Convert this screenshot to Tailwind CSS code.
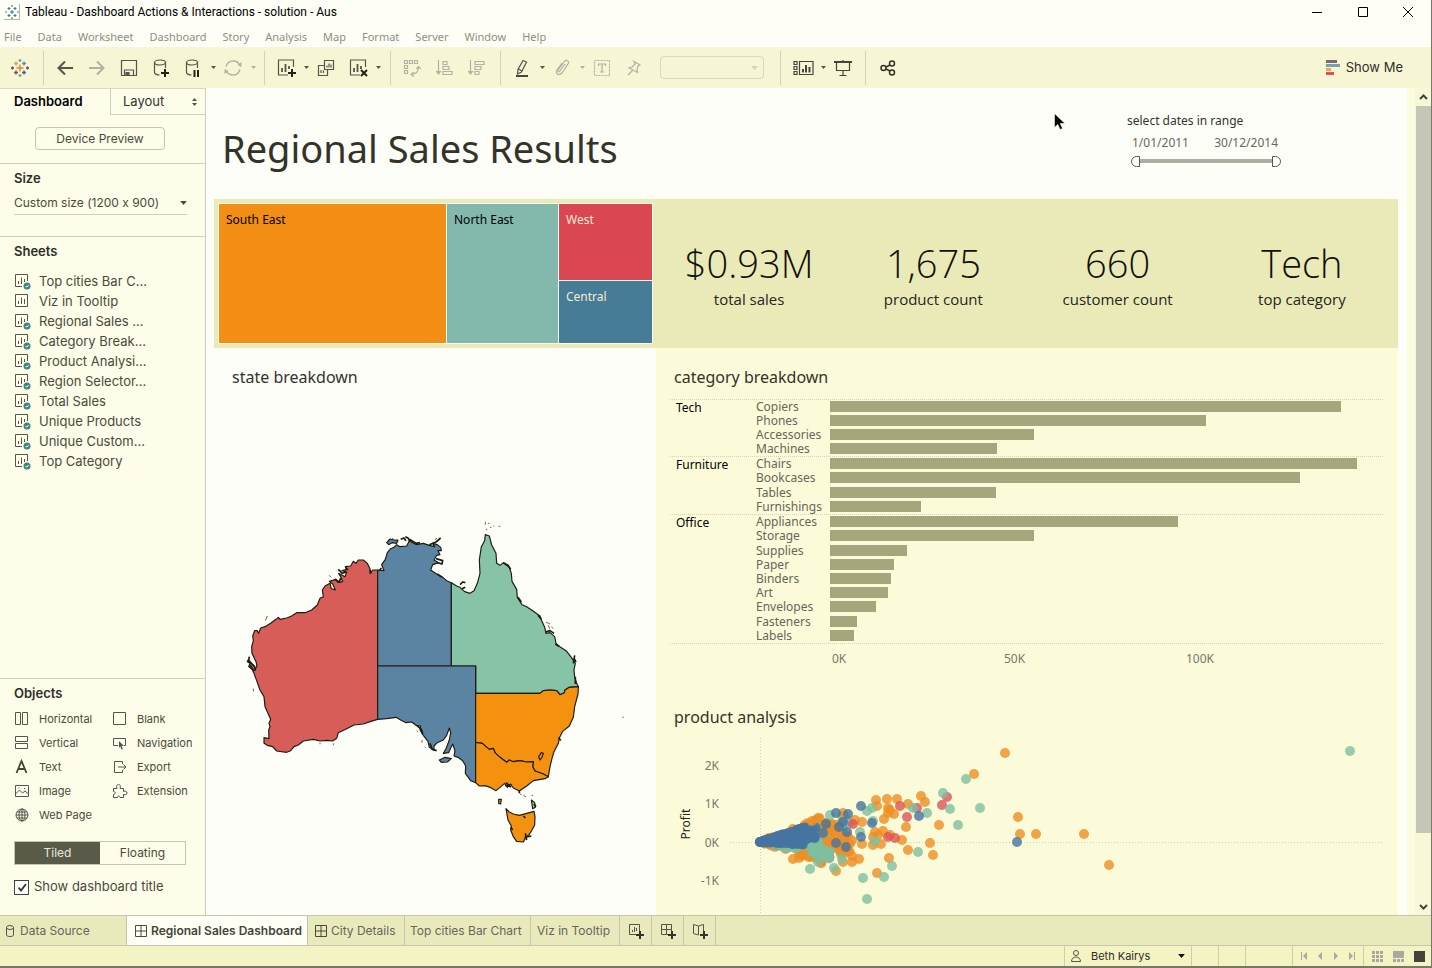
<!DOCTYPE html>
<html lang="en">
<head>
    <meta charset="UTF-8">
    <meta name="viewport" content="width=device-width, initial-scale=1.0">
    <title>Tableau - Dashboard Actions &amp; Interactions - solution - Aus</title>
    <script src="https://cdn.jsdelivr.net/npm/@tailwindcss/browser@4"></script>
</head>
<body class="h-screen overflow-hidden flex flex-col bg-[#fefef6] border-r border-b-2 border-[#77776a] font-['Inter',sans-serif] text-[13px] text-[#4a4a3a]">

    <!-- Shared icons -->
    <svg class="hidden">
        <symbol id="logo" viewBox="0 0 18 18" fill="none" stroke-width="1.4">
            <path d="M9 5.500v7M5.500 9h7" stroke="#e0863a"/>
            <path d="M5 2.500v4M3 4.500h4" stroke="#d9a441"/>
            <path d="M13 2.500v4M11 4.500h4" stroke="#5b8fa8"/>
            <path d="M5 11.500v4M3 13.500h4" stroke="#a83a62"/>
            <path d="M13 11.500v4M11 13.500h4" stroke="#3f5f8a"/>
            <path d="M9 0v3M7.500 1.500h3M9 15v3M7.500 16.500h3" stroke="#6fa8a0"/>
            <path d="M1.500 7.500v3M0 9h3M16.500 7.500v3M15 9h3" stroke="#4f4f80"/>
        </symbol>
        <symbol id="sheet" viewBox="0 0 18 18" fill="none" stroke="#55554a">
            <path d="M13.500 8V1.500h-12v12H8M4.500 11V8M7.500 11V4.500M10.500 9V6"/>
            <circle cx="13" cy="13" r="3.500" fill="#3f8580" stroke="none"/>
            <path d="M11.500 13l1.200 1.200 2-2.200" stroke="#fff"/>
        </symbol>
        <symbol id="sheet-plain" viewBox="0 0 18 18" fill="none" stroke="#55554a">
            <path d="M1.500 1.500h12v12h-12zM4.500 11V8M7.500 11V4.500M10.500 11V6"/>
        </symbol>
        <symbol id="grid" viewBox="0 0 12 12" fill="none" stroke="#4a4a3a">
            <path d="M.5.5h11v11H.5zM6 .5v11M.5 6h11"/>
        </symbol>
        <symbol id="caret" viewBox="0 0 5 3"><path d="M0 0h5L2.500 3z" fill="currentColor"/></symbol>
    </svg>

    <!-- Title bar -->
    <header class="h-6 shrink-0 flex items-center pl-1 text-xs text-black font-['Roboto',sans-serif]">
        <span class="w-4 h-4 border-r border-b border-[#b5b5a8] flex items-center justify-center mr-[5px]">
            <svg class="w-[14px] h-[14px]" viewBox="0 0 14 14" stroke="#3f8090" stroke-width="1.200"><path d="M7 5v4M5 7h4M4 2v3M2.500 3.500h3M10 2v3M8.500 3.500h3M4 9v3M2.500 10.500h3M10 9v3M8.500 10.500h3M7 0v2M7 12v2M0 7h2M12 7h2"/></svg>
        </span>
        <h1>Tableau - Dashboard Actions &amp; Interactions - solution - Aus</h1>
        <div class="ml-auto flex">
            <button class="w-[46px] h-6 flex items-center justify-center" aria-label="Minimize"><svg class="w-[10px] h-[10px]" viewBox="0 0 10 10" stroke="#000"><path d="M0 5.500h10"/></svg></button>
            <button class="w-[45px] h-6 flex items-center justify-center" aria-label="Maximize"><svg class="w-[10px] h-[10px]" viewBox="0 0 10 10" stroke="#000" fill="none"><path d="M.5.5h9v9h-9z"/></svg></button>
            <button class="w-[46px] h-6 flex items-center justify-center" aria-label="Close"><svg class="w-[10px] h-[10px]" viewBox="0 0 10 10" stroke="#000"><path d="M0 0l10 10M10 0L0 10"/></svg></button>
        </div>
    </header>

    <!-- Menu -->
    <nav class="h-[23px] shrink-0 flex items-center gap-4 pl-1 pt-1 text-[11px] text-[#8e8e80] font-['Noto_Sans',sans-serif]">
        <a href="#">File</a>
        <a href="#">Data</a>
        <a href="#">Worksheet</a>
        <a href="#">Dashboard</a>
        <a href="#">Story</a>
        <a href="#">Analysis</a>
        <a href="#">Map</a>
        <a href="#">Format</a>
        <a href="#">Server</a>
        <a href="#">Window</a>
        <a href="#">Help</a>
    </nav>

    <!-- Toolbar -->
    <div class="h-[41px] shrink-0 flex items-center bg-[#f6f6d4] text-[#55554a]">
        <button class="w-10 flex justify-center" aria-label="Start page"><svg class="w-[18px] h-[18px]"><use href="#logo"/></svg></button>
        <span class="w-px h-[34px] ml-[3px] mr-[5px] bg-[#d2d2c0]"></span>
        <button class="w-8 flex justify-center" aria-label="Undo"><svg class="w-4 h-4" viewBox="0 0 16 16" fill="none" stroke="#55554a" stroke-width="2"><path d="M16 8H1.500M8 1.500L1.500 8 8 14.500"/></svg></button>
        <button class="w-8 flex justify-center" aria-label="Redo"><svg class="w-4 h-4" viewBox="0 0 16 16" fill="none" stroke="#b2b2a4" stroke-width="2"><path d="M0 8h14.500M8 1.500L14.500 8 8 14.500"/></svg></button>
        <button class="w-8 flex justify-center" aria-label="Save"><svg class="w-[18px] h-[18px]" viewBox="0 0 18 18" fill="none" stroke="#55554a" stroke-width="1.200"><path d="M1.500 1.500h15v15h-15zM4.500 16v-5h9v5"/><path d="M6 13.500h3V16H6z" fill="#55554a"/></svg></button>
        <button class="w-8 flex justify-center" aria-label="New data source"><svg class="w-[18px] h-[18px]" viewBox="0 0 18 18" fill="none" stroke="#55554a" stroke-width="1.200"><ellipse cx="8" cy="3.500" rx="5.500" ry="2.500"/><path d="M2.500 3.500v10c0 1 2 2.500 5 2.500M13.500 3.500V9"/><path d="M13 10v8M9 14h8" stroke="#222218" stroke-width="2"/></svg></button>
        <button class="w-8 flex justify-center" aria-label="Pause auto updates"><svg class="w-[18px] h-[18px]" viewBox="0 0 18 18" fill="none" stroke="#55554a" stroke-width="1.200"><ellipse cx="8" cy="3.500" rx="5.500" ry="2.500"/><path d="M2.500 3.500v10c0 1 2 2.500 5 2.500M13.500 3.500V9"/><path d="M10.500 11v7M14 11v7" stroke="#222218" stroke-width="2"/></svg></button>
        <button class="w-2 flex justify-center" aria-label="Update options"><svg class="w-[5px] h-[3px]"><use href="#caret"/></svg></button>
        <button class="w-8 flex justify-center" aria-label="Run update"><svg class="w-[18px] h-[18px]" viewBox="0 0 18 18" fill="none" stroke="#b2b2a4" stroke-width="1.400"><path d="M2 7.500C3 4 6 2 9 2c3 0 5.500 1.500 6.500 4M16 10.500C15 14 12 16 9 16c-3 0-5.500-1.500-6.500-4"/><path d="M17.500 3v5l-4-2zM.5 15v-5l4 2z" fill="#b2b2a4" stroke="none"/></svg></button>
        <button class="w-2 flex justify-center text-[#b2b2a4]" aria-label="Run options"><svg class="w-[5px] h-[3px]"><use href="#caret"/></svg></button>
        <span class="w-px h-[34px] ml-[7px] mr-[5px] bg-[#d2d2c0]"></span>
        <button class="w-8 flex justify-center" aria-label="New worksheet"><svg class="w-[19px] h-[19px]" viewBox="0 0 19 19" fill="none" stroke="#55554a" stroke-width="1.200"><path d="M16.500 9V2h-15v15H11"/><path d="M5 14v-4M8.500 14V6M12 11V8" stroke-width="1.800"/><path d="M15 11v8M11 15h8" stroke="#222218" stroke-width="2"/></svg></button>
        <button class="w-2 flex justify-center" aria-label="New sheet options"><svg class="w-[5px] h-[3px]"><use href="#caret"/></svg></button>
        <button class="w-8 flex justify-center" aria-label="Duplicate"><svg class="w-[18px] h-[18px]" viewBox="0 0 18 18" fill="none" stroke="#55554a" stroke-width="1.200"><path d="M7.500 1.500h9v9h-9zM7 6.500H1.500v10h9V11M4 14v-3M6.500 14v-2.500M10 8.500v-2M12 8.500v-4M14 8.500v-3"/></svg></button>
        <button class="w-8 flex justify-center" aria-label="Clear sheet"><svg class="w-[19px] h-[19px]" viewBox="0 0 19 19" fill="none" stroke="#55554a" stroke-width="1.200"><path d="M16.500 9V2h-15v15H11"/><path d="M5 14v-4M8.500 14V6M12 11V8" stroke-width="1.800"/><path d="M12 12l6 6M18 12l-6 6" stroke="#222218" stroke-width="2"/></svg></button>
        <button class="w-2 flex justify-center" aria-label="Clear options"><svg class="w-[5px] h-[3px]"><use href="#caret"/></svg></button>
        <span class="w-px h-[34px] ml-2 mr-[5px] bg-[#d2d2c0]"></span>
        <button class="w-8 flex justify-center" aria-label="Swap rows and columns"><svg class="w-[18px] h-[18px]" viewBox="0 0 18 18" fill="none" stroke="#b2b2a4" stroke-width="1.200"><path d="M1.500 1.500h3v3h-3zM6.500 1.500h3v3h-3zM11.500 1.500h3v3h-3zM1.500 6.500h3v3h-3zM1.500 11.500h3v3h-3zM15.500 8c0 5-3 7-7 7.500M13 10l2.500-2.500L18 10M11 13l-3 2.500 3 2"/></svg></button>
        <button class="w-8 flex justify-center" aria-label="Sort ascending"><svg class="w-[18px] h-[18px]" viewBox="0 0 18 18" fill="none" stroke="#b2b2a4" stroke-width="1.200"><path d="M3.500 1v13M8 2.500h4v3H8zM8 7.500h6v3H8zM8 12.500h9v3H8z"/><path d="M0.500 12h6l-3 4z" fill="#b2b2a4" stroke="none"/></svg></button>
        <button class="w-8 flex justify-center" aria-label="Sort descending"><svg class="w-[18px] h-[18px]" viewBox="0 0 18 18" fill="none" stroke="#b2b2a4" stroke-width="1.200"><path d="M3.500 1v13M8 2.500h9v3H8zM8 7.500h6v3H8zM8 12.500h4v3H8z"/><path d="M0.500 12h6l-3 4z" fill="#b2b2a4" stroke="none"/></svg></button>
        <span class="w-px h-[34px] ml-2 mr-[5px] bg-[#d2d2c0]"></span>
        <button class="w-8 flex justify-center" aria-label="Highlight"><svg class="w-[18px] h-[18px]" viewBox="0 0 18 18" fill="none" stroke="#55554a" stroke-width="1.200"><path d="M10 1.500l3.500 1.500-5 10-4 2 .5-4.500zM5.500 10l3.500 2"/><path d="M3 17h12" stroke="#33332a" stroke-width="1.800"/></svg></button>
        <button class="w-2 flex justify-center" aria-label="Highlight options"><svg class="w-[5px] h-[3px]"><use href="#caret"/></svg></button>
        <button class="w-8 flex justify-center" aria-label="Group members"><svg class="w-[18px] h-[18px]" viewBox="0 0 18 18" fill="none" stroke="#b2b2a4" stroke-width="1.200"><path d="M12 5l-5 7c-1 2-3 0-2-1l6-8c2-3 6-1 4 2l-6 9c-3 3-7 1-5-3l5-7"/></svg></button>
        <button class="w-2 flex justify-center text-[#b2b2a4]" aria-label="Group options"><svg class="w-[5px] h-[3px]"><use href="#caret"/></svg></button>
        <button class="w-8 flex justify-center" aria-label="Show mark labels"><svg class="w-[18px] h-[18px]" viewBox="0 0 18 18" fill="none" stroke="#b2b2a4" stroke-width="1.200"><path d="M1.500 1.500h15v15h-15z" stroke-dasharray="2 1"/><path d="M5.500 7V5h7v2M9 5v8M7 13h4"/></svg></button>
        <button class="w-8 flex justify-center" aria-label="Fix axes"><svg class="w-[16px] h-[16px]" viewBox="0 0 16 16" fill="none" stroke="#b2b2a4" stroke-width="1.200"><path d="M8 1.500L14 5l-2 1-1 4 .5 2.500L3 8l3-1 3-3zM6.500 10.500L2 15"/></svg></button>
        <select class="w-[104px] h-[23px] ml-[10px] border border-[#d8d8c4] rounded-sm appearance-none" aria-label="Fit" disabled></select>
        <span class="w-0 flex justify-center text-[#d2d2c0]"><svg class="w-[7px] h-1 shrink-0 mr-5"><use href="#caret"/></svg></span>
        <span class="w-px h-[34px] ml-4 mr-1 bg-[#d2d2c0]"></span>
        <button class="w-9 flex justify-center" aria-label="Show or hide cards"><svg class="w-[21px] h-4" viewBox="0 0 21 16" fill="none" stroke="#44443a" stroke-width="1.200"><path d="M1 1.500h3v3H1zM1 6.500h3v3H1zM1 11.500h3v3H1zM6.500 1.500h13.500v13H6.500z"/><path d="M10 12.500V9M13 12.500V5M16.500 12.500V7" stroke-width="2"/></svg></button>
        <button class="w-1 flex justify-center" aria-label="Card options"><svg class="w-[5px] h-[3px] shrink-0"><use href="#caret"/></svg></button>
        <button class="w-9 flex justify-center" aria-label="Presentation mode"><svg class="w-[18px] h-[18px]" viewBox="0 0 18 18" fill="none" stroke="#44443a" stroke-width="1.200"><path d="M0 3h18" stroke-width="2"/><path d="M2.500 3v8.500h13V3M9 11.500v5M5.500 16.500h7M9 1v2"/></svg></button>
        <span class="w-px h-[34px] ml-1 mr-1 bg-[#d2d2c0]"></span>
        <button class="w-9 flex justify-center" aria-label="Share"><svg class="w-4 h-4" viewBox="0 0 16 16" fill="none" stroke="#33332a" stroke-width="1.500"><circle cx="3.500" cy="8" r="2.500"/><circle cx="12" cy="3.500" r="2.500"/><circle cx="12" cy="12.500" r="2.500"/><path d="M6 7l4-2M6 9l4 2"/></svg></button>
        <button class="ml-auto mr-7 flex items-center gap-[6px] text-[#2e2e28]">
            <svg class="w-[14px] h-[15px]" viewBox="0 0 14 15"><path d="M0 0h11v3H0z" fill="#7d6878"/><path d="M0 4h14v3H0z" fill="#79a0b0"/><path d="M0 8h5v3H0z" fill="#f0a060"/><path d="M0 12h8v3H0z" fill="#e05060"/></svg>
            Show Me
        </button>
    </div>

    <main class="flex-1 min-h-0 flex">
        <!-- Side pane -->
        <aside class="w-[206px] shrink-0 flex flex-col bg-[#fdfde9] border-r border-[#cfcfbc]">
            <div class="h-[27px] shrink-0 flex border-t border-[#d8d8c4]">
                <button class="w-[110px] pl-[14px] text-left font-semibold text-black">Dashboard</button>
                <button class="flex-1 flex items-center justify-between pl-3 pr-2 border-l border-b border-[#cfcfbc] text-[#33332a]">
                    Layout
                    <svg class="w-[5px] h-2" viewBox="0 0 5 8" fill="#55554a"><path d="M0 3h5L2.500 0zM0 5h5L2.500 8z"/></svg>
                </button>
            </div>
            <div class="h-[49px] shrink-0 pt-3 border-b border-[#cfcfbc]">
                <button class="block w-[130px] h-[23px] ml-[35px] border border-[#c4c4b2] rounded-sm text-xs">Device Preview</button>
            </div>
            <section class="h-[73px] shrink-0 pl-[14px] pr-[18px] pt-1 border-b border-[#cfcfbc]">
                <label for="size" class="block h-5 leading-5 font-semibold text-[#2e2e28]">Size</label>
                <div class="flex items-center border-b border-[#cfcfbc] mt-1">
                    <select id="size" class="flex-1 h-[22px] appearance-none text-xs [font-feature-settings:'calt'_0]">
                        <option>Custom size (1200 x 900)</option>
                    </select>
                    <svg class="w-[7px] h-1"><use href="#caret"/></svg>
                </div>
            </section>
            <section class="flex-1 min-h-0 pl-[14px] pt-1">
                <h2 class="h-5 leading-5 font-semibold text-[#2e2e28]">Sheets</h2>
                <ul id="sheets" class="mt-[11px]"></ul>
            </section>
            <section class="shrink-0 pl-[14px] pt-1 pb-5 border-t border-[#cfcfbc]">
                <h2 class="h-5 leading-5 font-semibold text-[#2e2e28]">Objects</h2>
                <div class="grid grid-cols-[98px_1fr] mt-1 text-[11px] leading-6">
                    <button class="flex items-center gap-[9px]"><svg class="w-4 h-4" viewBox="0 0 16 16" fill="none" stroke="#55554a"><path d="M1.500 1.500h5v12h-5zM8.500 1.500h5v12h-5z"/></svg>Horizontal</button>
                    <button class="flex items-center gap-[9px]"><svg class="w-4 h-4" viewBox="0 0 16 16" fill="none" stroke="#55554a"><path d="M1.500 1.500h12v12h-12z"/></svg>Blank</button>
                    <button class="flex items-center gap-[9px]"><svg class="w-4 h-4" viewBox="0 0 16 16" fill="none" stroke="#55554a"><path d="M1.500 1.500h12v5h-12zM1.500 8.500h12v5h-12z"/></svg>Vertical</button>
                    <button class="flex items-center gap-[9px]"><svg class="w-4 h-4 shrink-0" viewBox="0 0 16 16" fill="none" stroke="#55554a"><path d="M6 10.500H1.500v-7h12v7H12"/><path d="M7 6l5 5H9.500l1.500 3-1.500.5-1.200-3L7 13z" fill="#55554a" stroke="none"/></svg>Navigation</button>
                    <button class="flex items-center gap-[9px]"><svg class="w-4 h-4" viewBox="0 0 16 16" fill="none" stroke="#44443a" stroke-width="1.800"><path d="M2.500 14L7.500 2l5 12M4.500 10h6"/></svg>Text</button>
                    <button class="flex items-center gap-[9px]"><svg class="w-4 h-4" viewBox="0 0 16 16" fill="none" stroke="#55554a"><path d="M10.500 5V2.500h-8v11h8V11M6 8h8M11.500 5.500L14 8l-2.500 2.500"/></svg>Export</button>
                    <button class="flex items-center gap-[9px]"><svg class="w-4 h-4" viewBox="0 0 16 16" fill="none" stroke="#55554a"><path d="M1.500 2.500h13v11h-13zM1.500 11l4-4 3 3 2.500-2 3.500 3M4.500 5h1M10 5.500h1"/></svg>Image</button>
                    <button class="flex items-center gap-[9px]"><svg class="w-4 h-4" viewBox="0 0 16 16" fill="none" stroke="#55554a"><path d="M1.500 5.500h3.500c-1-2.500 0-4 1.500-4s2.500 1.500 1.500 4h3.500v3c2-1 3.500 0 3.500 1.500s-1.500 2-3.500 1.500v3H8c0-2-2.500-2-2.500 0h-4v-3c2 0 2.500-3 0-3z"/></svg>Extension</button>
                    <button class="flex items-center gap-[9px]"><svg class="w-4 h-4" viewBox="0 0 16 16" fill="none" stroke="#55554a"><circle cx="8" cy="8" r="6"/><ellipse cx="8" cy="8" rx="3" ry="6"/><path d="M8 2v12M2 8h12M3 5h10M3 11h10"/></svg>Web Page</button>
                </div>
                <div class="flex w-[172px] h-6 mt-[14px] border border-[#c4c4b2] text-xs">
                    <button class="flex-1 bg-[#5a5a48] text-[#e8e8dc]">Tiled</button>
                    <button class="flex-1">Floating</button>
                </div>
                <label class="flex items-center gap-[5px] mt-[14px] h-4">
                    <input type="checkbox" checked class="w-[15px] h-[15px] appearance-none border border-[#44443a] bg-white">
                    <span class="relative w-0"><svg class="absolute -left-4 -top-1 w-[9px] h-[9px]" viewBox="0 0 9 9" fill="none" stroke="#33332a" stroke-width="1.800"><path d="M.5 4.500l2.500 3L8 1"/></svg></span>
                    <span class="-ml-[5px]">Show dashboard title</span>
                </label>
            </section>
        </aside>

        <!-- Dashboard -->
        <div class="flex-1 min-w-0 overflow-hidden bg-[#fefef9] pl-2 pr-[9px] text-[#33332a] font-['Noto_Sans',sans-serif] text-xs">
            <div class="h-[111px] flex justify-between pl-2">
                <h2 class="text-[38px] leading-[48px] pt-9">Regional Sales Results</h2>
                <div class="w-[154px] mr-[117px] pt-6">
                    <p id="range-title" class="h-[18px] leading-[18px]">select dates in range</p>
                    <div class="flex justify-between pl-[5px] pr-[3px] mt-1 h-[18px] leading-[18px] text-[#66665a]"><span>1/01/2011</span><span>30/12/2014</span></div>
                    <div class="relative h-4 ml-1">
                        <div class="absolute left-2 right-2 top-[7px] h-1 bg-[#adada0]"></div>
                        <input type="range" aria-label="Start date" value="0" class="absolute inset-x-0 top-[3px] h-3 w-full appearance-none bg-transparent pointer-events-none [&::-webkit-slider-thumb]:appearance-none [&::-webkit-slider-thumb]:pointer-events-auto [&::-webkit-slider-thumb]:w-[9px] [&::-webkit-slider-thumb]:h-[11px] [&::-webkit-slider-thumb]:border [&::-webkit-slider-thumb]:border-[#55554a] [&::-webkit-slider-thumb]:bg-white [&::-webkit-slider-thumb]:rounded-l-full">
                        <input type="range" aria-label="End date" value="100" class="absolute inset-x-0 top-[3px] h-3 w-full appearance-none bg-transparent pointer-events-none [&::-webkit-slider-thumb]:appearance-none [&::-webkit-slider-thumb]:pointer-events-auto [&::-webkit-slider-thumb]:w-[9px] [&::-webkit-slider-thumb]:h-[11px] [&::-webkit-slider-thumb]:border [&::-webkit-slider-thumb]:border-[#55554a] [&::-webkit-slider-thumb]:bg-white [&::-webkit-slider-thumb]:rounded-r-full">
                    </div>
                </div>
            </div>

            <!-- Region treemap and totals -->
            <div class="h-[149px] flex bg-[#e9eab8]">
                <div class="w-[435px] m-1 shrink-0 flex gap-px p-px bg-[#fefef0] text-black">
                    <div class="w-[227px] bg-[#f28e13] pl-[7px] pt-2">South East</div>
                    <div class="w-[111px] bg-[#83b9ad] pl-[7px] pt-2">North East</div>
                    <div class="flex-1 flex flex-col gap-px text-[#f6ead0]">
                        <div class="h-[76px] bg-[#db4653] pl-[7px] pt-2">West</div>
                        <div class="flex-1 bg-[#467c95] pl-[7px] pt-2">Central</div>
                    </div>
                </div>
                <div class="flex-1 grid grid-cols-4 pt-[38px] pr-1 text-center text-[15px] leading-5 text-[#26261c] font-['Open_Sans',sans-serif]">
                    <div><p class="text-[38px] leading-[52px] font-light text-[#11110a]">$0.93M</p><p>total sales</p></div>
                    <div><p class="text-[38px] leading-[52px] font-light text-[#11110a]">1,675</p><p>product count</p></div>
                    <div><p class="text-[38px] leading-[52px] font-light text-[#11110a]">660</p><p>customer count</p></div>
                    <div><p class="text-[38px] leading-[52px] font-light text-[#11110a]">Tech</p><p>top category</p></div>
                </div>
            </div>

            <div class="flex">
                <section class="w-[442px] shrink-0 pl-4 pt-[17px]">
                    <h3 class="text-base leading-6 pl-[2px]">state breakdown</h3>
                    <svg class="w-[400px] h-[350px] mt-[121px]" viewBox="0 0 1200 1050" stroke="#1c1c10" stroke-width="3.500" stroke-linejoin="round" role="img" aria-label="Map of Australian states by region">
                        <path fill="#d75d58" d="M443 180V628L420 635 400 642 372 645 350 656 325 668 320 685 308 693 290 691 270 693 250 688 220 693 205 705 192 710 182 722 170 727 140 723 128 710 112 706 102 700 102 683 117 686 116 660 120 650 117 640 122 628 105 590 102 560 90 540 80 512 72 490 66 478 56 470 60 460 52 455 58 452 72 468 76 478 81 468 78 455 66 430 65 410 70 392 68 378 74 362 82 362 86 370 92 354 105 350 122 340 138 328 145 322 150 328 170 324 185 318 200 308 225 308 245 300 262 285 270 265 280 260 277 240 285 228 300 220 304 236 316 240 308 222 298 214 318 208 324 217 338 215 332 200 326 190 345 200 350 186 336 182 352 178 346 170 362 168 370 154 378 160 385 150 400 150 412 160 420 176 420 190 428 180z"/>
                        <path fill="#5b83a2" d="M443 468V180L462 182 455 164 466 148 472 128 482 116 492 112 500 104 510 110 530 108 538 92 548 98 560 104 580 100 598 106 614 110 608 100 622 104 632 112 634 122 624 122 630 134 620 136 612 150 626 158 608 164 602 180 620 192 636 200 650 212 664 218V468z"/>
                        <path fill="#87c3a6" d="M664 218L680 228 690 232 704 245 720 250 732 242 742 220 750 190 748 150 754 110 764 92 766 74 778 78 785 105 798 130 800 160 810 166 820 158 838 172 844 190 846 214 860 238 862 262 876 284 890 290 905 300 930 318 936 334 944 352 948 370 960 368 974 380 978 400 992 412 1010 424 1024 442 1036 460 1032 480 1034 500 1040 520 1045 530 1018 532 1005 540 1003 548 990 554 980 542 960 540 940 542 930 550H737V468H664z"/>
                        <path fill="#5b83a2" d="M443 468H737V818L722 812 706 790 707 768 698 752 684 742 672 738 675 722 668 702 662 714 656 728 640 730 648 716 658 690 662 668 658 654 650 676 640 690 622 698 612 708 612 720 598 712 594 694 580 676 570 660 572 648 558 646 545 636 528 638 512 630 498 622 470 626 443 628z"/>
                        <path fill="#f4920f" d="M737 550H930L940 542 960 540 980 542 990 554 1003 548 1005 540 1018 532 1045 530 1044 552 1034 590 1030 622 1018 648 998 664 988 684 985 700 972 725 966 745 960 770 955 800 940 792 915 783 908 770 910 755 890 756 870 752 850 755 838 750 830 757 810 742 795 728 790 715 778 718 768 710 757 700 737 697z"/>
                        <path fill="#f4920f" d="M737 697L757 700 768 710 778 718 790 715 795 728 810 742 830 757 838 750 850 755 870 752 890 756 910 755 908 770 915 783 940 792 955 800 945 806 910 812 890 828 868 843 850 834 842 822 832 832 824 820 810 832 798 842 780 832 765 827 748 828 737 818z"/>
                        <path fill="#f4920f" d="M828 896L838 906 850 912 868 916 890 910 912 904 915 920 914 945 906 960 896 976 888 980 880 996 860 994 850 980 842 960 844 948 834 930z"/>
                        <path fill="#5b83a2" d="M470 98L480 87 492 90 504 90 500 100 486 98 476 104zM628 750L645 742 664 746 652 756 634 757z"/>
                        <path fill="#f4920f" d="M926 740L934 728 940 730 936 742 930 750zM806 868L814 868 812 882 806 880z"/>
                        <path fill="#87c3a6" d="M904 870L914 878 916 892 908 896z"/>
                        <path fill="none" stroke-width="5" d="M512 88l10-4 6 8M526 80l8 4 6 10M538 88l20 12 12-2M598 104l20-8 14-12M618 146l20 6-2 10-14-4M622 192l14 10M690 224l8-8 8 2M706 232l-10 4M820 158l14 8 8 12M864 262l10 14M924 316l10 12M946 366l14-4 12 8M976 402l12 8M1030 460l4-24M1036 500v22M1032 444l6 12M52 450l22 20 2 12M58 440l-2 12M60 466l12 18M325 178l12 12 12-4M332 204l-4 12-14-8M346 172l8 8M420 180l4 10M448 182l6-8M986 682l6 10M826 826l16 4-14-12M560 646l14 12 4 14M600 700l6 18 14 4M868 842v8M884 982l20-4M890 990l-4-20M912 882l6 8M842 952l6 8M880 918l6 6"/>
                        <path fill="none" stroke="#66664a" stroke-width="3" d="M766 36v8M774 40h4M770 56v5M780 52h4M790 48h3M806 49h5M112 318l-6 14M298 196l5 6M948 336l12 6M964 350l6 6M955 346l4 10M576 690v8M584 710l2 3M70 536v8M560 662l4 4M270 698v5M310 700v6M880 855l8 6M905 856h4M1177 622h4M870 850l4 5M616 90l4-6M486 86h4"/>
                    </svg>
                </section>

                <section class="flex-1 min-w-0 bg-[#fbfbd9] pl-[14px] pr-[15px] pt-[17px]">
                    <h3 class="text-base leading-6 pl-1">category breakdown</h3>
                    <div id="bars" class="mt-[10px] border-b border-dotted border-[#d4d4be]"></div>
                    <div class="flex h-7 items-center text-[#77776a] pl-[162px] pt-px">
                        <span class="w-[172px]">0K</span><span class="w-[182px]">50K</span><span>100K</span>
                    </div>
                    <h3 class="text-base leading-6 mt-[33px] pl-1">product analysis</h3>
                    <svg id="scatter" class="w-[724px] h-[185px] -ml-[10px] mt-[3px]" viewBox="0 42 724 185" font-size="12" fill="#77776a" role="img" aria-label="Profit by sales for each product">
                        <path d="M100.500 48v180M70 152.500h654" stroke="#d0d0ba" stroke-dasharray="1 2"/>
                        <text x="59" y="80" text-anchor="end">2K</text>
                        <text x="59" y="118" text-anchor="end">1K</text>
                        <text x="59" y="157" text-anchor="end">0K</text>
                        <text x="59" y="195" text-anchor="end">-1K</text>
                        <text transform="translate(30 134) rotate(-90)" text-anchor="middle" fill="#22221a">Profit</text>
                    </svg>
                </section>
            </div>
        </div>

        <!-- Scrollbar -->
        <div class="w-2 shrink-0 bg-[#fbfbdf]"></div>
        <div class="w-4 shrink-0 flex flex-col items-center bg-[#f8f8d8]">
            <svg class="w-[9px] h-[6px] my-[6px] shrink-0" viewBox="0 0 9 6" fill="none" stroke="#44443a" stroke-width="2"><path d="M1 5l3.500-3.500L8 5"/></svg>
            <div class="w-[15px] h-[727px] bg-[#c6c6b6]"></div>
            <svg class="w-[9px] h-[6px] mt-auto mb-[5px] shrink-0" viewBox="0 0 9 6" fill="none" stroke="#44443a" stroke-width="2"><path d="M1 1l3.500 3.500L8 1"/></svg>
        </div>
    </main>

    <!-- Sheet tabs -->
    <nav class="h-[31px] shrink-0 flex border-y border-[#c6c6ac] bg-[#e9eabb] text-xs text-[#66665a] whitespace-nowrap">
        <a href="#" class="w-[127px] flex items-center gap-[6px] pl-[6px] border-r border-[#c6c6ac]"><svg class="w-2 h-3" viewBox="0 0 8 12" fill="none" stroke="#55554a"><ellipse cx="4" cy="2.500" rx="3.500" ry="2"/><path d="M.5 2.500V10c0 2 7 2 7 0V2.500"/></svg>Data Source</a>
        <a href="#" class="w-[181px] flex items-center gap-1 pl-2 bg-[#fefef4] border-r border-[#c6c6ac] font-semibold text-[#44443a]"><svg class="w-3 h-3 shrink-0"><use href="#grid"/></svg>Regional Sales Dashboard</a>
        <a href="#" class="w-[97px] flex items-center gap-1 pl-[7px] border-r border-[#c6c6ac]"><svg class="w-3 h-3 shrink-0"><use href="#grid"/></svg>City Details</a>
        <a href="#" class="w-[126px] flex items-center pl-[5px] border-r border-[#c6c6ac]">Top cities Bar Chart</a>
        <a href="#" class="w-[89px] flex items-center pl-[6px] border-r border-[#c6c6ac]">Viz in Tooltip</a>
        <button class="w-8 flex items-center justify-center border-r border-[#c6c6ac]" aria-label="New worksheet"><svg class="w-4 h-4" viewBox="0 0 16 16" fill="none" stroke="#55554a"><path d="M11.500 8V1.500h-10v10H8M4.500 9V7M6.500 9V4M8.500 8V5"/><path d="M12 8v8M8 12h8" stroke="#33332a" stroke-width="2"/></svg></button>
        <button class="w-8 flex items-center justify-center border-r border-[#c6c6ac]" aria-label="New dashboard"><svg class="w-4 h-4" viewBox="0 0 16 16" fill="none" stroke="#55554a"><path d="M11.500 8V1.500h-10v10H8M6.500 1.500v10M1.500 6.500h10"/><path d="M12 8v8M8 12h8" stroke="#33332a" stroke-width="2"/></svg></button>
        <button class="w-8 flex items-center justify-center border-r border-[#c6c6ac]" aria-label="New story"><svg class="w-4 h-4" viewBox="0 0 16 16" fill="none" stroke="#55554a"><path d="M11.500 8V1.500L6.500 3l-5-1.500v9l5 1.500V3"/><path d="M12 8v8M8 12h8" stroke="#33332a" stroke-width="2"/></svg></button>
    </nav>

    <!-- Status bar -->
    <footer class="h-5 shrink-0 flex justify-end bg-[#f3f3c4] text-xs text-[#2e2e28]">
        <button class="w-[127px] flex items-center pl-[6px] pr-[6px] border-l border-[#cfcfb0]">
            <svg class="w-[10px] h-3 mr-[10px]" viewBox="0 0 10 12" fill="none" stroke="#55554a"><circle cx="5" cy="3" r="2.500"/><path d="M.5 11.500c0-6 9-6 9 0z"/></svg>
            <span class="text-[11px]">Beth Kairys</span>
            <svg class="w-[7px] h-1 ml-auto text-black"><use href="#caret"/></svg>
        </button>
        <span class="w-[27px] border-l border-[#cfcfb0]"></span>
        <span class="w-[27px] border-l border-[#cfcfb0]"></span>
        <span class="w-[47px] border-l border-[#cfcfb0]"></span>
        <div class="w-[72px] flex items-center justify-center border-l border-r border-[#cfcfb0]">
            <svg class="w-[56px] h-2" viewBox="0 0 56 8" fill="#a8a89c"><path d="M1 0h1v8H1zM7 0v8L3 4zM22 0v8l-4-4zM34 0v8l4-4zM49 0v8l4-4zM54 0h1v8h-1z"/></svg>
        </div>
        <div class="w-[67px] flex items-center gap-[10px] pl-2">
            <svg class="w-[11px] h-[11px]" viewBox="0 0 11 11" fill="#a8a89c"><path d="M0 0h3v3H0zM4 0h3v3H4zM8 0h3v3H8zM0 4h3v3H0zM4 4h3v3H4zM8 4h3v3H8zM0 8h3v3H0zM4 8h3v3H4zM8 8h3v3H8z"/></svg>
            <svg class="w-[11px] h-[11px]" viewBox="0 0 11 11" fill="#a8a89c"><path d="M0 0h11v7H0zM0 8h3v3H0zM4 8h3v3H4zM8 8h3v3H8z"/></svg>
            <svg class="w-[11px] h-[11px]" viewBox="0 0 11 11" fill="#44443a"><path d="M0 0h11v11H0z"/></svg>
        </div>
    </footer>

    <!-- Mouse pointer -->
    <svg class="absolute left-[1054px] top-[113px] w-3 h-[17px]" viewBox="0 0 12 17" stroke="#fff" stroke-width=".6"><path d="M.5.5v14l3.300-3 2.200 5 2.500-1-2.200-5H11z"/></svg>

    <script>
        const sheets = ['Top cities Bar C...', 'Viz in Tooltip', 'Regional Sales ...', 'Category Break...', 'Product Analysi...',
            'Region Selector...', 'Total Sales', 'Unique Products', 'Unique Custom...', 'Top Category'];
        document.getElementById('sheets').innerHTML = sheets.map(name => `
            <li class="flex items-center gap-[7px] h-5"><svg class="w-[18px] h-[18px]"><use href="#${name === 'Viz in Tooltip' ? 'sheet-plain' : 'sheet'}"/></svg>${name}</li>`).join('');

        // Sales per sub-category, as a share of the axis length
        const groups = [
            ['Tech', 'h-[57px]', [['Copiers', 92.4], ['Phones', 68], ['Accessories', 36.9], ['Machines', 30.2]]],
            ['Furniture', 'h-[58px]', [['Chairs', 95.3], ['Bookcases', 85], ['Tables', 30], ['Furnishings', 16.5]]],
            ['Office', 'h-[129px]', [['Appliances', 62.9], ['Storage', 36.9], ['Supplies', 13.9], ['Paper', 11.6], ['Binders', 11],
                ['Art', 10.5], ['Envelopes', 8.3], ['Fasteners', 4.9], ['Labels', 4.3]]],
        ];
        document.getElementById('bars').innerHTML = groups.map(([group, height, rows]) => `
            <div class="${height} flex border-t border-dotted border-[#d4d4be]">
                <div class="w-20 shrink-0 pl-[6px] leading-4 text-black">${group}</div>
                <div class="flex-1 flex flex-col">${rows.map(([name, share]) => `
                    <div class="flex-1 min-h-0 flex items-center">
                        <span class="w-20 shrink-0 pl-[6px] leading-3 text-[#66665a]">${name}</span>
                        <span class="flex-1 flex pb-px"><span class="h-[11px] bg-[#a5a67c]" style="width:${share}%"></span></span>
                    </div>`).join('')}
                </div>
            </div>`).join('');

        // Product marks
        const svg = document.getElementById('scatter');
        const orange = '#ee8e22', teal = '#7dbf9f', red = '#dd5555', blue = '#4674a0';
        function dot(x, y, fill, opacity) {
            const c = document.createElementNS('http://www.w3.org/2000/svg', 'circle');
            c.setAttribute('cx', x);
            c.setAttribute('cy', y);
            c.setAttribute('r', 5);
            c.setAttribute('fill', fill);
            c.setAttribute('fill-opacity', opacity);
            svg.appendChild(c);
        }
        let seed = 7;
        function rand() {
            seed = (seed * 16807) % 2147483647;
            return seed / 2147483647;
        }
        function cloud(count, x0, x1, up, down, fill) {
            for (let i = 0; i < count; i++) {
                const x = x0 + rand() * (x1 - x0);
                const t = (x - 100) / 60;
                dot(x, 152 - up * t + rand() * (up + down) * t, fill, 0.85);
            }
        }
        cloud(110, 104, 162, 25, 21, orange);
        cloud(14, 104, 185, 16, 14, red);
        cloud(80, 106, 172, 16, 15, teal);
        cloud(30, 152, 190, 19, 10, teal);
        cloud(26, 160, 194, 18, 12, orange);
        cloud(220, 100, 146, 20, 4, blue);
        cloud(24, 130, 157, 16, -2, blue);

        const marks = [
            [orange, [[345, 63], [314, 84], [261, 106], [265, 112], [216, 110], [227, 109], [237, 109], [248, 114], [228, 118], [228, 123], [234, 124],
                [230, 120], [224, 129], [217, 116], [246, 137], [279, 135], [358, 127], [360, 144], [376, 144], [270, 153], [273, 165], [248, 160],
                [242, 150], [229, 168], [217, 183], [215, 142], [223, 141], [213, 147], [221, 154], [213, 155], [202, 154], [202, 132], [195, 130],
                [199, 169], [192, 172], [192, 166], [183, 172], [176, 181], [218, 145], [230, 145], [424, 144], [449, 175], [142, 166], [133, 169],
                [158, 128], [152, 131], [144, 164], [139, 168], [183, 123]]],
            [red, [[287, 107], [282, 115], [240, 116], [247, 127], [257, 118], [228, 147], [235, 148], [193, 134]]],
            [teal, [[306, 89], [283, 103], [290, 119], [320, 118], [298, 135], [267, 123], [253, 118], [258, 162], [232, 176], [224, 187], [203, 188],
                [207, 209], [174, 178], [158, 172], [150, 179], [182, 169], [212, 118], [207, 121], [213, 131], [200, 142], [215, 151], [690, 61],
                [170, 125], [168, 162], [168, 167]]],
            [blue, [[201, 116], [176, 123], [188, 124], [212, 133], [259, 126], [357, 152], [201, 147], [176, 153], [186, 157], [166, 134],
                [183, 132], [179, 137], [187, 142], [163, 143]]],
        ];
        marks.forEach(([fill, points]) => points.forEach(([x, y]) => dot(x, y, fill, 0.8)));
    </script>
</body>
</html>
